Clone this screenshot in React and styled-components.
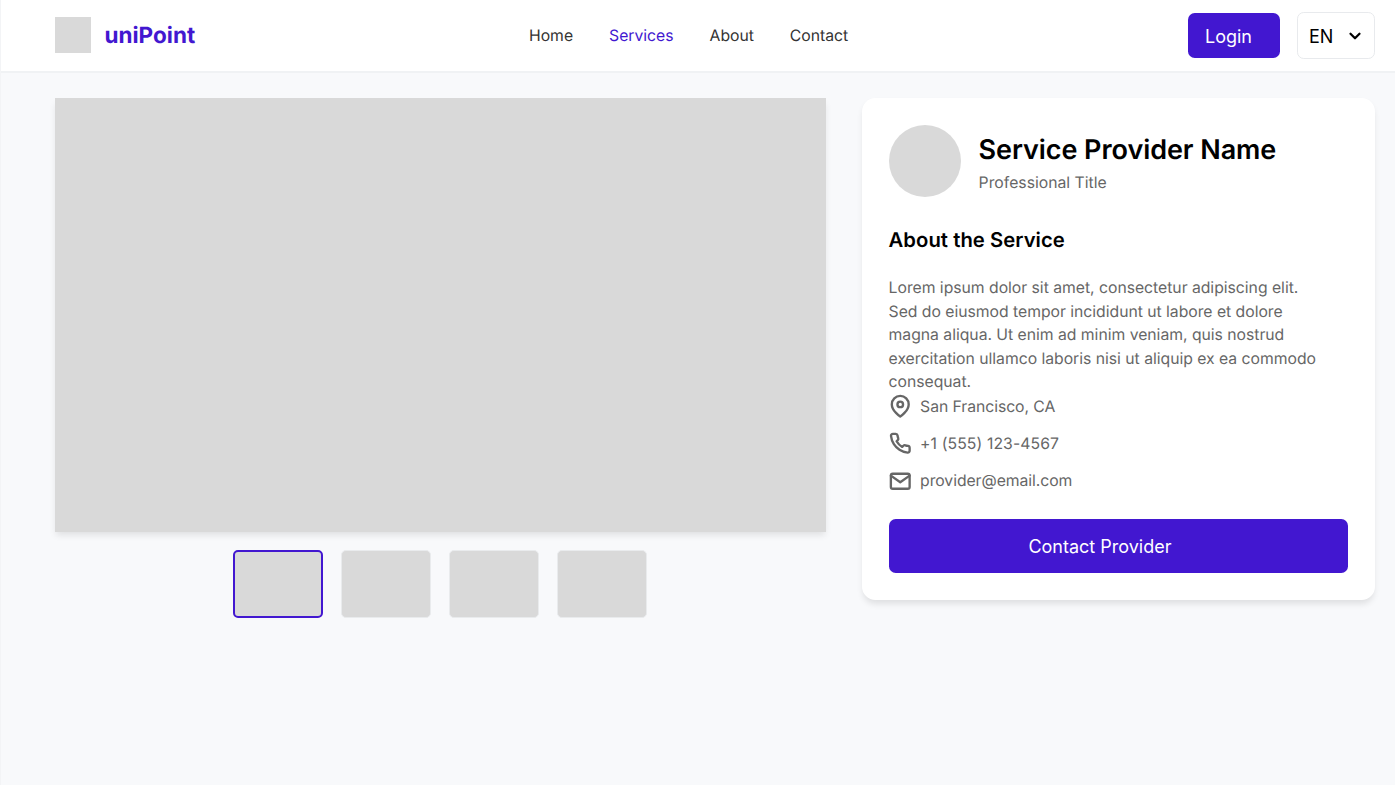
import React from "react";
import styled, { createGlobalStyle } from "styled-components";

const brand = "#4217d0";
const placeholder = "#d9d9d9";
const muted = "#666666";

const GlobalStyle = createGlobalStyle`
  *, *::before, *::after { box-sizing: border-box; }
  body {
    margin: 0;
    background: #f8f9fb;
    font-family: Inter, "Liberation Sans", sans-serif;
    text-rendering: geometricPrecision;
    color: #000;
    overflow: hidden;
  }
  h1, h2, p { margin: 0; }
  button { font: inherit; cursor: pointer; }
`;

const Page = styled.div`
  height: 785px;
  border-left: 1px solid #f3f4f6;
`;

const Header = styled.header`
  height: 73px;
  padding: 0 20px 0 53.5px;
  display: flex;
  align-items: center;
  background: #fff;
  border-bottom: 2px solid #f0f2f4;
`;

const Brand = styled.div`
  width: 474.5px;
  display: flex;
  align-items: center;
  gap: 14px;
  color: ${brand};
  font-size: 22.5px;
  font-weight: 700;
  line-height: 36px;
`;

const Logo = styled.div`
  width: 36px;
  height: 36px;
  margin-bottom: 1px;
  background: ${placeholder};
`;

const Nav = styled.nav`
  display: flex;
  gap: 36px;
`;

const NavLink = styled.a`
  font-size: 15.75px;
  line-height: 24px;
  letter-spacing: -0.02px;
  color: ${(p) => (p.$active ? brand : "#333")};
`;

const Actions = styled.div`
  margin-left: auto;
  display: flex;
  align-items: center;
  gap: 17px;
`;

const LoginButton = styled.button`
  width: 92px;
  height: 45px;
  padding: 1px 0 0 17px;
  border: 0;
  border-radius: 6.75px;
  background: ${brand};
  color: #fff;
  font-size: 18px;
  text-align: left;
`;

const LanguageButton = styled.button`
  width: 78px;
  height: 47px;
  padding: 1px 10px 0 11px;
  display: flex;
  align-items: center;
  justify-content: space-between;
  border: 1px solid #e8eaed;
  border-radius: 6.75px;
  background: #fff;
  color: #000;
  font-size: 18px;
`;

const Main = styled.main`
  display: flex;
  align-items: flex-start;
  gap: 36px;
  padding: 25.3px 19.7px 0 53.6px;
`;

const Gallery = styled.section`
  width: 771px;
  display: flex;
  flex-direction: column;
  align-items: center;
  gap: 18px;
`;

const Hero = styled.div`
  width: 100%;
  height: 434px;
  background: ${placeholder};
  box-shadow: 0 4.5px 6.75px -1px rgba(0, 0, 0, 0.1);
`;

const Thumbs = styled.div`
  display: flex;
  gap: 18px;
  padding-right: 1px;
`;

const Thumb = styled.div`
  width: 90px;
  height: 67.5px;
  border: ${(p) => (p.$selected ? `2px solid ${brand}` : "1px solid #e9ebed")};
  border-radius: 5px;
  background: ${placeholder};
`;

const Card = styled.aside`
  flex: 1;
  height: 502px;
  padding: 27px;
  border-radius: 13.5px;
  background: #fff;
  box-shadow: 0 4.5px 6.75px -1px rgba(0, 0, 0, 0.1);
`;

const Profile = styled.div`
  display: flex;
  gap: 18px;
  height: 72px;
`;

const Avatar = styled.div`
  width: 72px;
  height: 72px;
  border-radius: 50%;
  background: ${placeholder};
`;

const ProviderName = styled.h1`
  padding-top: 8px;
  font-size: 27px;
  font-weight: 600;
  line-height: 34px;
  letter-spacing: -0.07px;
  white-space: nowrap;
`;

const ProviderTitle = styled.p`
  margin-top: 4px;
  font-size: 15.75px;
  line-height: 24px;
  color: ${muted};
`;

const SectionTitle = styled.h2`
  margin-top: 27px;
  font-size: 20.25px;
  font-weight: 600;
  line-height: 31px;
  letter-spacing: 0.04px;
`;

const Description = styled.p`
  margin-top: 20.7px;
  width: 440px;
  font-size: 15.75px;
  line-height: 23.63px;
  letter-spacing: -0.025px;
  color: ${muted};
`;

const Contacts = styled.div`
  margin-top: 0.6px;
  display: flex;
  flex-direction: column;
  gap: 13.5px;
`;

const ContactRow = styled.div`
  display: flex;
  align-items: center;
  gap: 9px;
  height: 23.63px;
  font-size: 15.75px;
  letter-spacing: ${(p) => (p.$numeric ? "0.1px" : "-0.06px")};
  color: ${muted};
`;

const ContactButton = styled.button`
  width: 100%;
  height: 54px;
  margin-top: 26px;
  padding: 1px 37px 0 0;
  border: 0;
  border-radius: 6.75px;
  background: ${brand};
  color: #fff;
  font-size: 18px;
`;

const Icon = ({ size = 22.5, stroke = 2.5, children }) => (
  <svg
    width={size}
    height={size}
    viewBox="0 0 24 24"
    fill="none"
    stroke="currentColor"
    strokeWidth={stroke}
    strokeLinecap="round"
    strokeLinejoin="round"
    overflow="visible"
  >
    {children}
  </svg>
);

export default function App() {
  return (
    <Page>
      <GlobalStyle />
      <Header>
        <Brand>
          <Logo />
          <span>uniPoint</span>
        </Brand>
        <Nav>
          <NavLink>Home</NavLink>
          <NavLink $active>Services</NavLink>
          <NavLink>About</NavLink>
          <NavLink>Contact</NavLink>
        </Nav>
        <Actions>
          <LoginButton>Login</LoginButton>
          <LanguageButton>
            EN
            <Icon size={18} stroke={3}>
              <polyline points="6 9 12 15 18 9" />
            </Icon>
          </LanguageButton>
        </Actions>
      </Header>
      <Main>
        <Gallery>
          <Hero />
          <Thumbs>
            <Thumb $selected />
            <Thumb />
            <Thumb />
            <Thumb />
          </Thumbs>
        </Gallery>
        <Card>
          <Profile>
            <Avatar />
            <div>
              <ProviderName>Service Provider Name</ProviderName>
              <ProviderTitle>Professional Title</ProviderTitle>
            </div>
          </Profile>
          <SectionTitle>About the Service</SectionTitle>
          <Description>
            Lorem ipsum dolor sit amet, consectetur adipiscing elit. Sed do
            eiusmod tempor incididunt ut labore et dolore magna aliqua. Ut enim
            ad minim veniam, quis nostrud exercitation ullamco laboris nisi ut
            aliquip ex ea commodo consequat.
          </Description>
          <Contacts>
            <ContactRow>
              <Icon>
                <path d="M21 10c0 7-9 13-9 13s-9-6-9-13a9 9 0 0 1 18 0z" />
                <circle cx="12" cy="10" r="3" />
              </Icon>
              San Francisco, CA
            </ContactRow>
            <ContactRow $numeric>
              <Icon>
                <path d="M22 16.92v3a2 2 0 0 1-2.18 2 19.79 19.79 0 0 1-8.63-3.07 19.5 19.5 0 0 1-6-6 19.79 19.79 0 0 1-3.07-8.67A2 2 0 0 1 4.11 2h3a2 2 0 0 1 2 1.72 12.84 12.84 0 0 0 .7 2.81 2 2 0 0 1-.45 2.11L8.09 9.91a16 16 0 0 0 6 6l1.27-1.27a2 2 0 0 1 2.11-.45 12.84 12.84 0 0 0 2.81.7A2 2 0 0 1 22 16.92z" />
              </Icon>
              +1 (555) 123-4567
            </ContactRow>
            <ContactRow>
              <Icon>
                <path d="M4 4h16c1.1 0 2 .9 2 2v12c0 1.1-.9 2-2 2H4c-1.1 0-2-.9-2-2V6c0-1.1.9-2 2-2z" />
                <polyline points="22 6 12 13 2 6" />
              </Icon>
              provider@email.com
            </ContactRow>
          </Contacts>
          <ContactButton>Contact Provider</ContactButton>
        </Card>
      </Main>
    </Page>
  );
}
